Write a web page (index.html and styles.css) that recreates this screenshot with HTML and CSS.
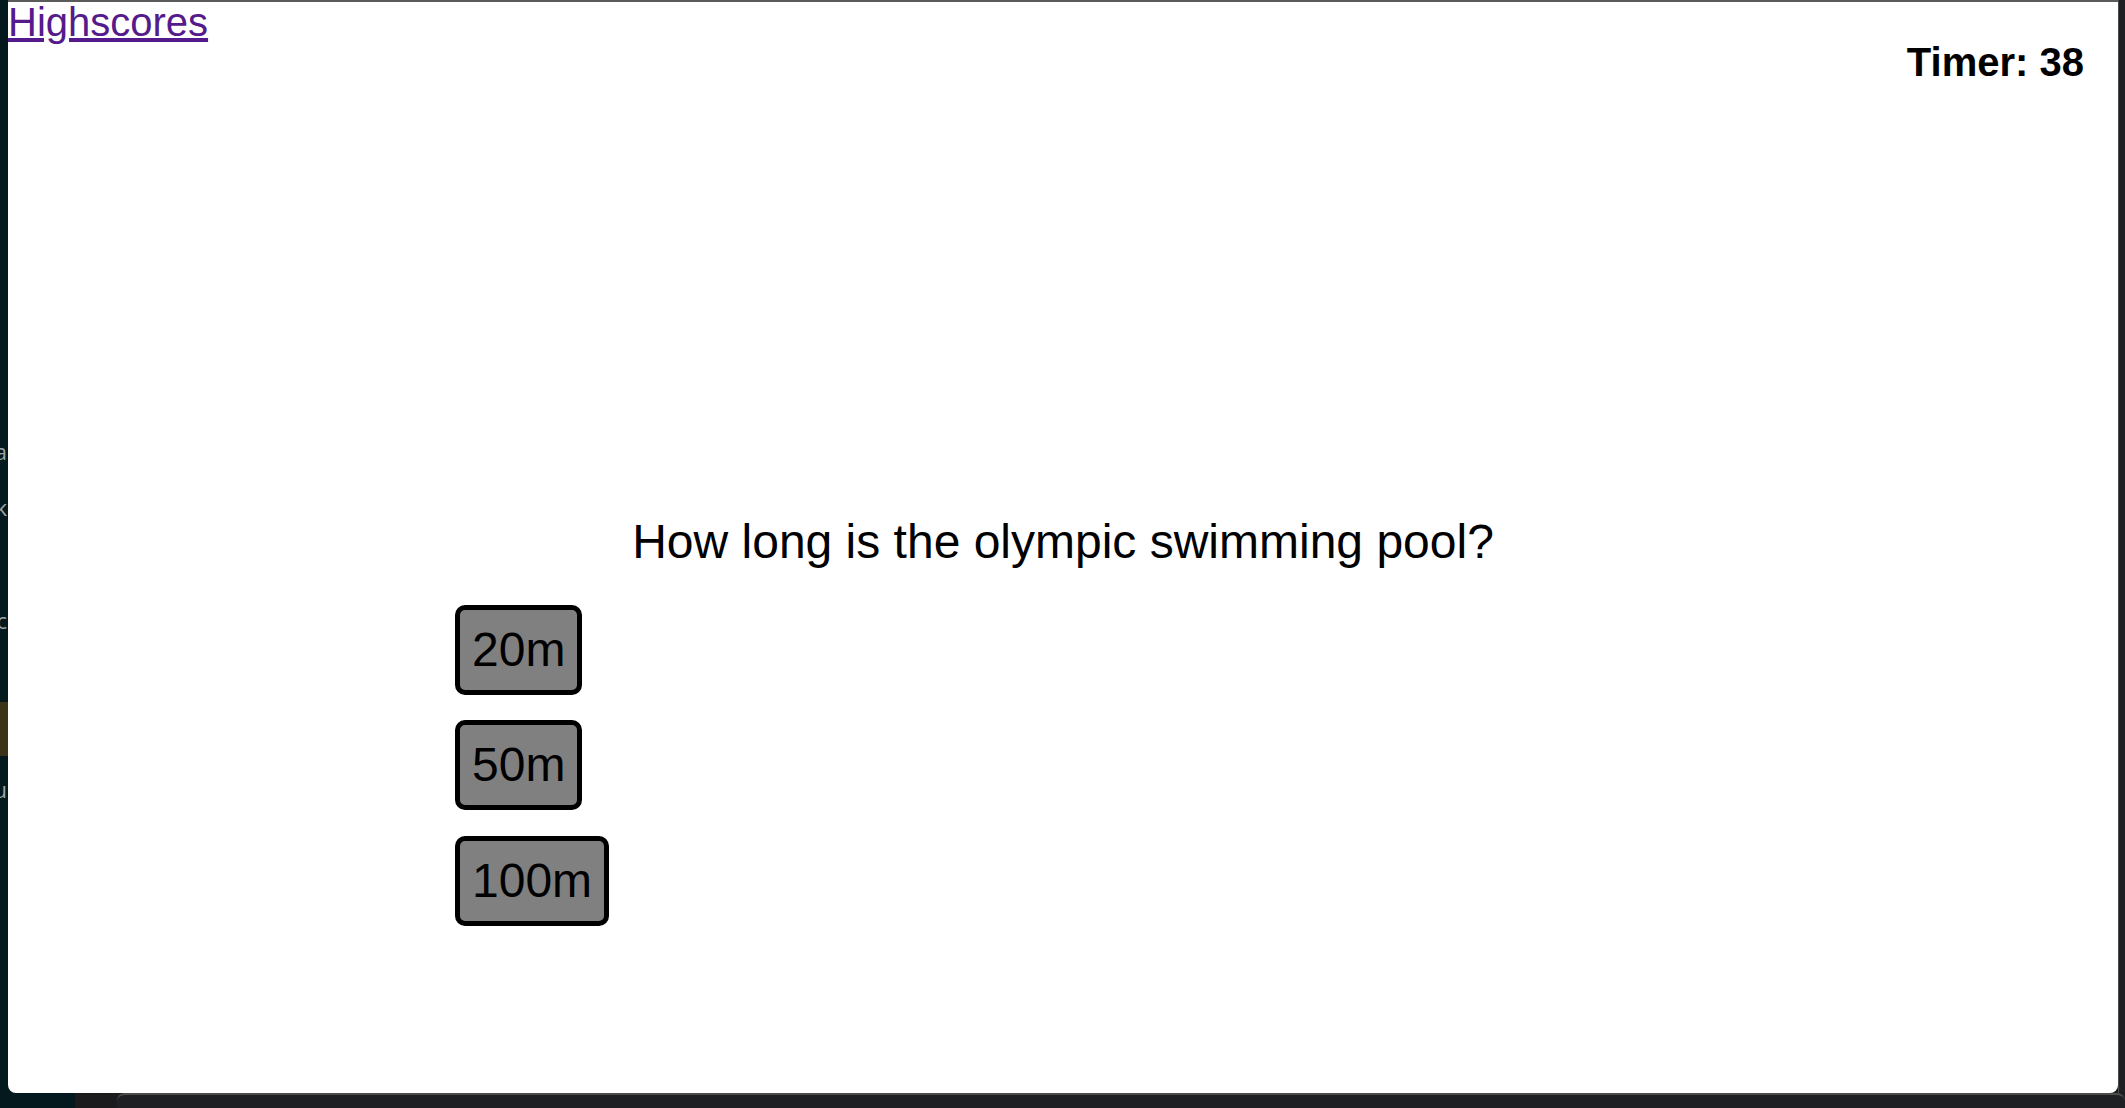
FILE: index.html
```html
<!DOCTYPE html>
<html lang="en">
<head>
<meta charset="utf-8">
<title>Quiz</title>
<link rel="stylesheet" href="styles.css">
</head>
<body>
<div class="screen">
  <div class="top-row">
    <div class="bg-strip">
      <div class="strip-space s1"></div>
      <div class="strip-line">Ja</div>
      <div class="strip-space s2"></div>
      <div class="strip-line">ok</div>
      <div class="strip-space s3"></div>
      <div class="strip-line">oc</div>
      <div class="strip-space s4"></div>
      <div class="strip-hl"></div>
      <div class="strip-space s5"></div>
      <div class="strip-line">ou</div>
    </div>
    <div class="window">
      <div class="titlebar"></div>
      <header class="header">
        <a href="#" class="hs-link">Highscores</a>
        <div class="timer">Timer: 38</div>
      </header>
      <main class="quiz">
        <p class="question">How long is the olympic swimming pool?</p>
        <div class="answers">
          <button class="answer">20m</button>
          <button class="answer">50m</button>
          <button class="answer">100m</button>
        </div>
      </main>
    </div>
    <div class="right-strip"></div>
  </div>
  <div class="bottom-row">
    <div class="b-teal"></div>
    <div class="b-dark"></div>
    <div class="taskbar"></div>
  </div>
</div>
</body>
</html>
```
FILE: styles.css
```css
html, body {
  margin: 0;
  padding: 0;
}
body {
  background: #1c1d20;
  font-family: "Liberation Sans", Arial, sans-serif;
  overflow: hidden;
}
.screen {
  width: 2125px;
  height: 1108px;
  display: flex;
  flex-direction: column;
}
.top-row {
  display: flex;
  height: 1093px;
  flex: none;
  background: linear-gradient(to right, #03191d 75px, #1c1d20 75px);
}
.bg-strip {
  width: 8px;
  flex: none;
  background: #03191d;
  overflow: hidden;
  display: flex;
  flex-direction: column;
}
.strip-space { flex: none; }
.s1 { height: 438px; }
.s2 { height: 30px; }
.s3 { height: 87px; }
.s4 { height: 69px; }
.s5 { height: 20px; }
.strip-line {
  flex: none;
  height: 26px;
  line-height: 26px;
  font-family: "Open Sans", sans-serif;
  font-size: 22px;
  color: #9aa3a5;
  white-space: nowrap;
  direction: rtl;
  text-align: right;
  padding-right: 1px;
}
.strip-hl {
  flex: none;
  height: 54px;
  background: #3b3318;
}
.window {
  flex: 1;
  background: #ffffff;
  border-bottom-left-radius: 8px;
  border-bottom-right-radius: 8px;
  display: flex;
  flex-direction: column;
  overflow: hidden;
}
.titlebar {
  height: 2px;
  flex: none;
  background: #5b5b5b;
}
.header {
  display: flex;
  justify-content: space-between;
  align-items: flex-start;
  padding-right: 34px;
}
.hs-link {
  font-size: 40px;
  line-height: 40px;
  color: #551a8b;
  text-decoration: underline;
}
.timer {
  font-size: 40px;
  font-weight: bold;
  margin-top: 38px;
  color: #000;
}
.quiz {
  display: flex;
  flex-direction: column;
}
.question {
  margin: 428.5px 0 0;
  font-size: 48px;
  line-height: 55px;
  text-align: center;
  color: #000;
}
.answers {
  display: flex;
  flex-direction: column;
  align-items: flex-start;
  gap: 25.5px;
  margin-top: 36px;
  padding-left: 447px;
}
.answer {
  font-family: "Liberation Sans", Arial, sans-serif;
  font-size: 48px;
  line-height: 56px;
  padding: 12px;
  margin: 0;
  border: 5px solid #000;
  border-radius: 10px;
  background: #808080;
  color: #000;
}
.right-strip {
  width: 7px;
  flex: none;
  box-sizing: border-box;
  background: #1f2023;
  border-left: 1px solid #4a4a4a;
}
.bottom-row {
  display: flex;
  height: 15px;
  flex: none;
}
.b-teal {
  width: 75px;
  background: #03191d;
}
.b-dark {
  width: 42px;
  background: #1b1b1d;
}
.taskbar {
  flex: 1;
  background: #1f2023;
  border-top: 2px solid #4d4d4d;
  border-top-left-radius: 8px;
  border-top-right-radius: 8px;
}
```
